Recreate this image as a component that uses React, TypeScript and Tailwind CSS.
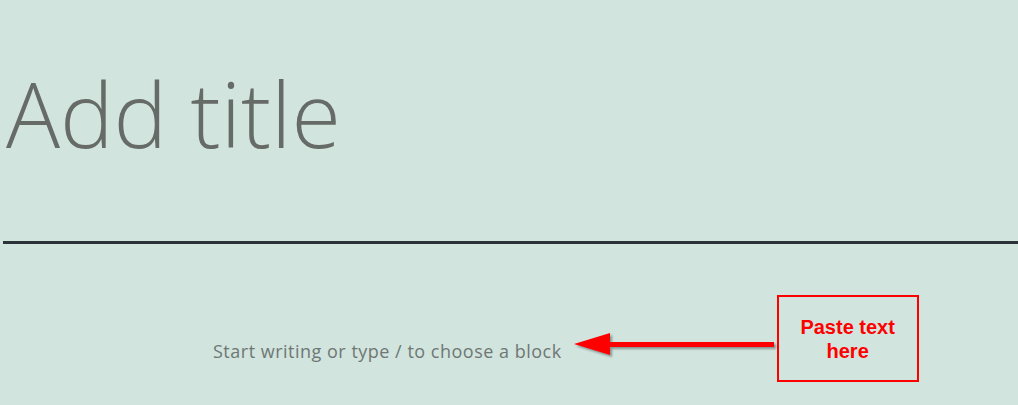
export default function App() {
  return (
    <div className="h-[405px] w-[1018px] overflow-hidden bg-[#d1e4de] font-['Open_Sans',sans-serif]">
      <div className="h-[241px] pl-[6px] pt-[53px]">
        <h1 className="text-[90px] leading-[120px] font-light text-[#666b68]">Add title</h1>
      </div>
      <div className="ml-[3px] border-t-[3px] border-[#2c3338]" />
      <div className="flex items-start pl-[213px] pt-[51px]">
        <p className="mt-[44px] text-[18px] leading-[24px] tracking-[0.5px] text-[#6f7774]">
          Start writing or type / to choose a block
        </p>
        <svg
          width="204"
          height="32"
          viewBox="0 0 204 32"
          className="ml-[11px] mt-[35px] drop-shadow-[2px_2px_1px_rgba(0,0,0,0.35)]"
        >
          <polygon points="1,14 37,3 37,25" fill="#ff0000" />
          <rect x="36" y="12" width="165" height="5" fill="#ff0000" />
        </svg>
        <div className="flex h-[87px] w-[142px] items-center justify-center border-2 border-[#ff0000] font-['Liberation_Sans',Arial,sans-serif] text-[20px] leading-[24px] font-bold text-[#ff0000] text-center">
          Paste text
          <br />
          here
        </div>
      </div>
    </div>
  );
}
